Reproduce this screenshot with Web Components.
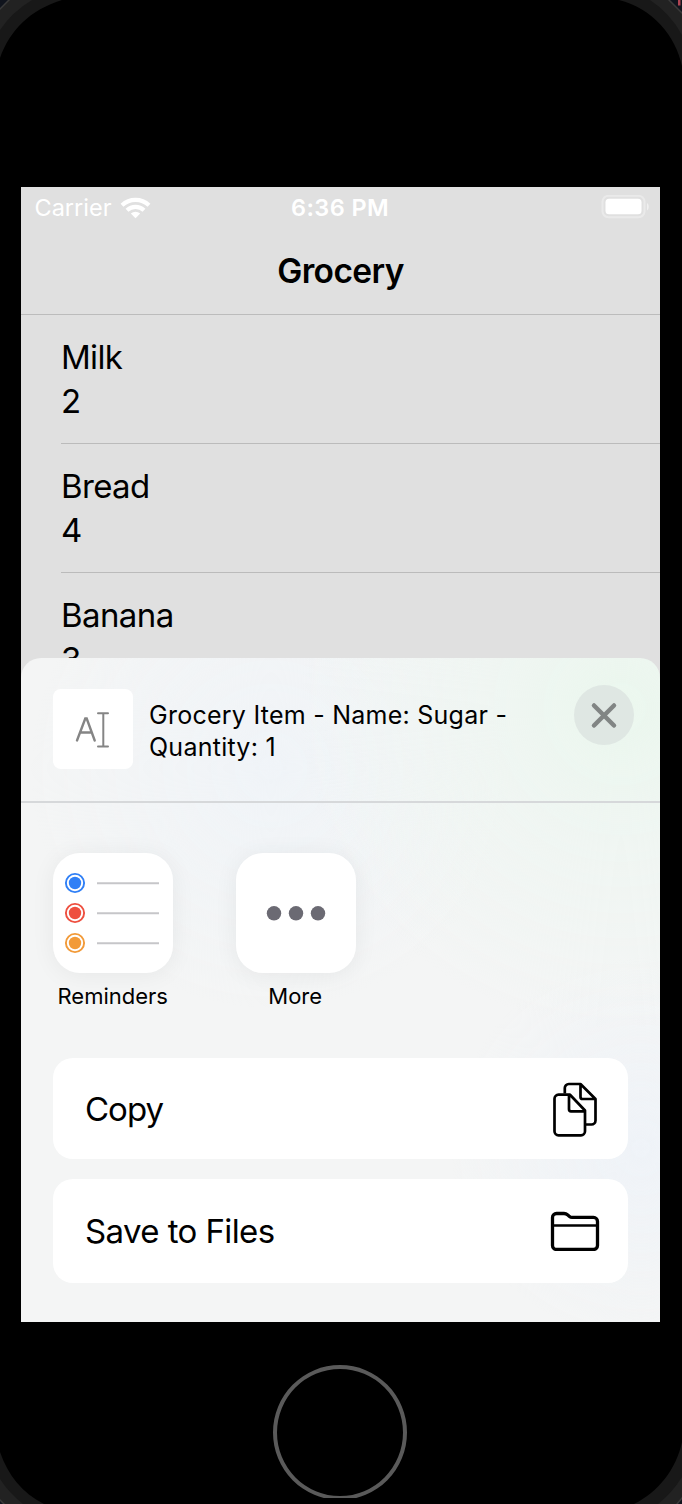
<!DOCTYPE html>
<html lang="en">
<head>
<meta charset="utf-8">
<title>Grocery</title>
<style>
html,body{margin:0;background:#000;overflow:hidden}
body{font-family:Inter,"Liberation Sans",sans-serif;color:#000}
</style>
</head>
<body>
<phone-frame>
  <status-bar></status-bar>
  <nav-bar>Grocery</nav-bar>
  <grocery-row name="Milk" qty="2" ls="-.7"></grocery-row>
  <grocery-row name="Bread" qty="4" ls="-.65"></grocery-row>
  <grocery-row name="Banana" qty="3" ls="-.6"></grocery-row>
  <share-sheet slot="sheet">
    <sheet-header slot="header"><span>Grocery Item - Name: Sugar -</span><br><span>Quantity: 1</span></sheet-header>
    <app-tile slot="apps" label="Reminders">
      <svg width="120" height="120" viewBox="0 0 120 120"><g fill="none" stroke-width="1.9"><circle cx="22" cy="30" r="9.1" stroke="#2f7ff6"/><circle cx="22" cy="60" r="9.1" stroke="#ee4f3f"/><circle cx="22" cy="90" r="9.1" stroke="#f29a38"/></g><circle cx="22" cy="30" r="6.2" fill="#2f7ff6"/><circle cx="22" cy="60" r="6.2" fill="#ee4f3f"/><circle cx="22" cy="90" r="6.2" fill="#f29a38"/><path d="M44 30.2h62M44 60.2h62M44 90.2h62" stroke="#c6c6c9" stroke-width="2"/></svg>
    </app-tile>
    <app-tile slot="apps" label="More">
      <svg width="120" height="120" viewBox="0 0 120 120" fill="#6b6a73"><circle cx="38" cy="60.300" r="7.200"/><circle cx="60" cy="60.300" r="7.200"/><circle cx="82" cy="60.300" r="7.200"/></svg>
    </app-tile>
    <sheet-action slot="actions" label="Copy" style="--h:101px;--ls:-1px;--pr:30px">
      <svg width="46" height="56" viewBox="0 0 46 56" fill="none" stroke="#000" stroke-width="2.700" stroke-linejoin="round"><path d="M12.800 12.500V7a4 4 0 0 1 4-4H28.500L43.500 18V39.500a4 4 0 0 1-4 4H34M28.500 3V16a2 2 0 0 0 2 2H43.500"/><path d="M6.500 13.700H18L33 29.500V50.300a4 4 0 0 1-4 4H6.500a4 4 0 0 1-4-4V17.700a4 4 0 0 1 4-4ZM17 13.700V28.300a2 2 0 0 0 2 2H33"/></svg>
    </sheet-action>
    <sheet-action slot="actions" label="Save to Files" style="--h:104px;--ls:-.6px;--up:-.5px">
      <svg width="50" height="40" viewBox="0 0 50 40" fill="none" stroke="#000" stroke-width="3.300" stroke-linejoin="round"><path d="M2.500 6.500a4 4 0 0 1 4-4H14c1.500 0 2.500.4 3.500 1.300l2 1.700c.8.700 1.500.9 2.500.9H43.500a4 4 0 0 1 4 4V34.500a4 4 0 0 1-4 4H6.500a4 4 0 0 1-4-4Z"/><path d="M2.500 14.500H47.500" stroke-width="2.600"/></svg>
    </sheet-action>
  </share-sheet>
</phone-frame>
<script>
function define(name, html, setup){
  customElements.define(name, class extends HTMLElement{
    constructor(){
      super();
      const t=document.createElement('template');
      t.innerHTML=html;
      this.attachShadow({mode:'open'}).append(t.content.cloneNode(true));
    }
    connectedCallback(){ if(setup) setup(this,this.shadowRoot); }
  });
}
define('phone-frame',`<style>
:host{display:grid;grid-template:187px 1135px 182px / 21px 639px 22px;width:682px;height:1504px;position:relative;overflow:hidden;background:#000}
.bezel{position:absolute;inset:0}
.screen{grid-area:2/2;position:relative;overflow:hidden;background:#e0e0e0}
.home{grid-area:3/2;justify-self:start;margin:43px 0 0 252px;height:133px;width:134px;overflow:hidden;position:relative}
.home i{display:block;box-sizing:border-box;width:134px;height:135px;border:4px solid #5a5a5a;border-radius:50%}
</style>
<svg class="bezel" width="682" height="1504" viewBox="0 0 682 1504">
<rect width="682" height="1504" fill="#000"/>
<g fill="#181818">
<path d="M0 0V58C10 30 30 10 62 0Z"/>
<path d="M682 0V66C676 36 652 8 619 0Z"/>
<path d="M0 1504V1452C8 1475 22 1493 44 1504Z"/>
<path d="M682 1504V1442C676 1470 658 1492 634 1504Z"/>
</g>
<g fill="#222">
<path d="M0 0V30Q12 12 32 0Z"/>
<path d="M682 0V35Q670 13 650 0Z"/>
<path d="M0 1504V1479Q9 1493 23 1504Z"/>
<path d="M682 1504V1477Q672 1493 658 1504Z"/>
</g>
<g fill="#10141d" stroke="#3a3a3a" stroke-width="1.500">
<path d="M-3 -3V12L0 9 9 0 12 -3Z"/>
<path d="M685 -3V16L682 13 669 0 666 -3Z"/>
<path d="M-3 1507V1497L0 1500 4 1504 7 1507Z"/>
<path d="M685 1507V1495L682 1498 677 1504 674 1507Z"/>
</g>
<path d="M678 0h2.500v5.500h-2.500z" fill="#b04452"/>
</svg>
<div class="screen"><slot></slot><slot name="sheet"></slot></div>
<div class="home"><i></i></div>`);
define('status-bar',`<style>
:host{display:grid;grid-template-columns:1fr auto 1fr;align-items:center;height:40px;padding:0 11px 0 13px;color:#fff;font-size:24px;line-height:40px}
.l{display:flex;align-items:center;gap:9px}.c{font-size:23.500px;letter-spacing:0}.t{font-weight:600;font-size:23.500px;letter-spacing:.4px;position:relative;top:1px;left:-1.500px}
.l span{position:relative;top:1px;left:.5px}.b{justify-self:end}svg{display:block}
</style>
<div class="l"><span class="c">Carrier</span><svg width="31" height="23" viewBox="0 0 31 23" fill="none" stroke="#fff" stroke-width="4.200"><path d="M2 9.200a20 20 0 0 1 27 0"/><path d="M7 14.300a12.500 12.500 0 0 1 17 0"/><path d="M15.500 22.300 10.800 17.600a7 7 0 0 1 9.400 0Z" fill="#fff" stroke="none"/></svg></div>
<span class="t">6:36 PM</span>
<svg class="b" width="48" height="24" viewBox="0 0 48 24"><rect x="1.500" y=".8" width="42" height="21.500" rx="6" fill="none" stroke="#eaeaea" stroke-width="2"/><rect x="4.500" y="3.800" width="36" height="15.500" rx="3.500" fill="#fff"/><path d="M46 8c2.300 1.500 2.300 6 0 7.500z" fill="#f0f0f0"/></svg>`);
define('nav-bar',`<style>
:host{display:flex;justify-content:center;align-items:center;box-sizing:border-box;height:88px;border-bottom:1px solid #bcbcbc;font-size:33.500px;font-weight:600;line-height:42px;letter-spacing:-.6px}
</style><span><slot></slot></span>`);
define('grocery-row',`<style>
:host{display:block;height:129px;box-sizing:border-box;padding-left:40px}
div{box-sizing:border-box;height:129px;border-bottom:1px solid #bbb;padding-top:20px;font-size:33px;line-height:44px}
span{display:block}
</style><div><span class="n"></span><span class="q"></span></div>`,(e,r)=>{
 const n=r.querySelector('.n');n.textContent=e.getAttribute('name');n.style.letterSpacing=e.getAttribute('ls')+'px';
 r.querySelector('.q').textContent=e.getAttribute('qty');});
define('share-sheet',`<style>
:host{position:absolute;left:0;right:0;top:470.500px;bottom:0;border-radius:20px 20px 0 0;overflow:hidden;
background:radial-gradient(ellipse 320px 320px at 600px 50px,#ebf7ee 0,rgba(238,246,241,.75) 40%,rgba(244,245,245,0) 100%),radial-gradient(circle 240px at 250px 110px,#f0f4f8,rgba(244,245,245,0)),radial-gradient(circle 190px at 620px 490px,#eff3f8,rgba(244,245,245,0)),#f4f5f5}
.apps{display:flex;gap:62.500px;padding:50.500px 0 0 32px;height:205px}
.actions{display:flex;flex-direction:column;gap:20px;padding:0 32px}
</style><slot name="header"></slot><div class="apps"><slot name="apps"></slot></div><div class="actions"><slot name="actions"></slot></div>`);
define('sheet-header',`<style>
:host{display:flex;box-sizing:border-box;height:145px;padding:31.500px 26px 0 32px;border-bottom:2px solid #d6d8da}
.thumb{width:80px;height:80px;border-radius:8px;background:#fff;flex:none}
.txt{margin:9.500px 0 0 16px;flex:1;font-size:25px;line-height:32px;letter-spacing:.25px;white-space:nowrap}
.x{width:60px;height:60px;margin-top:-4.500px;flex:none}
svg{display:block}
</style><div class="thumb"><svg width="80" height="80" viewBox="0 0 80 80" fill="none" stroke="#858585" stroke-width="2.400" stroke-linecap="round"><path d="M24 51.500 32.300 29.500h1.400L41.700 51.500M27.200 43.500H38.700"/><path d="M50.300 25V57M45 24.200H55M45 57.500H55" stroke-width="2"/></svg></div>
<div class="txt"><slot></slot></div>
<svg class="x" viewBox="0 0 60 60"><circle cx="30" cy="30" r="30" fill="#dfe7e3"/><path d="M20 20.500 40 40.500M40 20.500 20 40.500" stroke="#818584" stroke-width="4.500" stroke-linecap="round"/></svg>`);
define('app-tile',`<style>
:host{display:flex;flex-direction:column;align-items:center;width:120px}
.i{width:120px;height:120px;border-radius:27px;background:#fff;box-shadow:0 2px 24px rgba(0,0,0,.06)}
span{font-size:22px;line-height:28px;margin-top:9px;white-space:nowrap;position:relative;left:-.3px}
</style><div class="i"><slot></slot></div><span></span>`,(e,r)=>{r.querySelector('span').textContent=e.getAttribute('label')});
define('sheet-action',`<style>
:host{display:flex;box-sizing:border-box;align-items:center;justify-content:space-between;height:var(--h);border-radius:20px;background:#fff;padding:0 var(--pr,28px) 0 32px;font-size:33px;letter-spacing:var(--ls)}
span{position:relative;top:var(--up,0)}
</style><span></span><slot></slot>`,(e,r)=>{r.querySelector('span').textContent=e.getAttribute('label')});
</script>
</body>
</html>
